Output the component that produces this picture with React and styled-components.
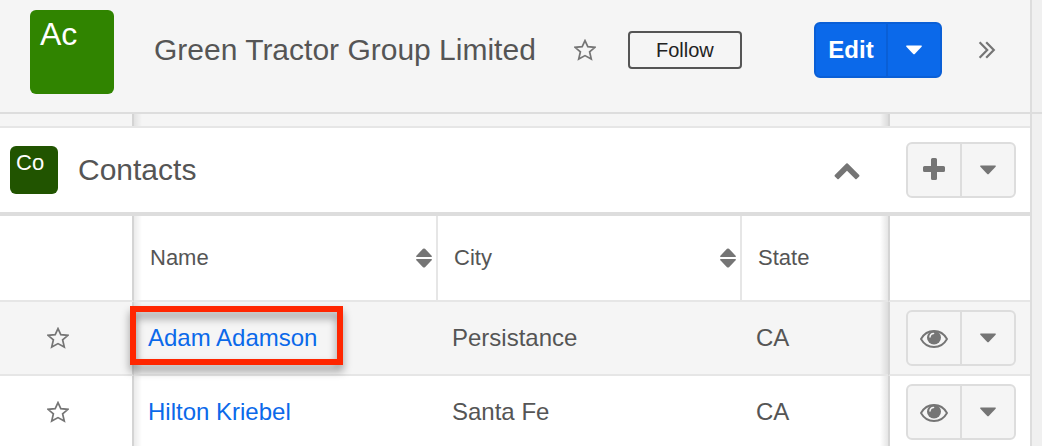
import React from 'react'
import styled, { createGlobalStyle } from 'styled-components';

const GlobalStyle = createGlobalStyle`
  * {
    box-sizing: border-box;
  }
  body {
    margin: 0;
    font-family: "Liberation Sans", Helvetica, Arial, sans-serif;
    color: #555;
    background-color: #f0f0f0;
  }
  button {
    margin: 0;
    padding: 0;
    border: 0;
    background: none;
    color: inherit;
    font-family: inherit;
    cursor: pointer;
  }
  svg {
    display: block;
    fill: currentColor;
  }
`

const Page = styled.div`
  height: 100vh;
  overflow: hidden;
  display: grid;
  grid-template-columns: minmax(0, 1fr) 12px;
  grid-template-rows: auto 1fr;
`

const Gutter = styled.div`
  border-left: 2px solid #ddd;
  background-color: #f0f0f0;
  border-bottom: ${props => props.$line ? "2px solid #ddd" : "0"};
`

const Header = styled.header`
  display: flex;
  align-items: flex-start;
  gap: 40px;
  padding: 10px 34px 18px 30px;
  background-color: #f5f5f5;
  border-bottom: 2px solid #ddd;
`

const Tile = styled.div`
  flex: none;
  width: ${props => props.$large ? "84px" : "48px"};
  height: ${props => props.$large ? "84px" : "48px"};
  padding: ${props => props.$large ? "6px 10px" : "4px 6px"};
  border-radius: 6px;
  background-color: ${props => props.$large ? "#308400" : "#215400"};
  color: #fff;
  font-size: ${props => props.$large ? "32px" : "22px"};
  line-height: ${props => props.$large ? "36px" : "26px"};
`

const HeaderContent = styled.div`
  flex: 1;
  height: 80px;
  display: flex;
  align-items: center;
  gap: 36px;
  h1 {
    margin: 0;
    font-size: 30px;
    font-weight: normal;
    white-space: nowrap;
  }
`

const FollowGroup = styled.div`
  flex: 1;
  display: flex;
  align-items: center;
  gap: 32px;
  padding-left: 2px;
`

const IconButton = styled.button`
  flex: none;
  color: #757575;
`

const FollowButton = styled.button`
  width: 114px;
  height: 38px;
  border: 2px solid #555;
  border-radius: 4px;
  color: #222;
  font-size: 20px;
`

const SplitButton = styled.div`
  flex: none;
  display: inline-flex;
  height: 56px;
  border: 2px solid ${props => props.$primary ? "#0a5fd6" : "#ddd"};
  border-radius: 6px;
  background-color: ${props => props.$primary ? "#0b69ea" : "#f5f5f5"};
  color: ${props => props.$primary ? "#fff" : "#757575"};
  vertical-align: top;
  button {
    display: flex;
    align-items: center;
    justify-content: center;
    width: 52px;
    font-size: 24px;
    font-weight: bold;
  }
  button:first-child {
    width: ${props => props.$primary ? "72px" : "54px"};
    border-right: 2px solid ${props => props.$primary ? "#0a5fd6" : "#ddd"};
  }
`

const Panel = styled.main`
  min-width: 0;
  background-color: #fff;
`

const leftShade = "linear-gradient(to right, rgba(0, 0, 0, 0.08), transparent) left / 8px 100% no-repeat";
const rightShade = "linear-gradient(to left, rgba(0, 0, 0, 0.1), transparent) right / 8px 100% no-repeat";

const Strip = styled.div`
  display: grid;
  grid-template-columns: 134px 1fr 142px;
  height: 14px;
  background-color: #f5f5f5;
  border-bottom: 2px solid #e6e6e6;
  div:first-child {
    border-right: 2px solid #d4d4d4;
  }
  div:nth-child(2) {
    background: ${leftShade}, ${rightShade};
  }
  div:last-child {
    border-left: 2px solid #d4d4d4;
  }
`

const SectionHeader = styled.div`
  display: flex;
  align-items: center;
  gap: 20px;
  padding: 14px 14px 14px 10px;
  border-bottom: 4px solid #ddd;
  h2 {
    flex: 1;
    margin: 0;
    font-size: 30px;
    font-weight: normal;
  }
`

const SectionActions = styled.div`
  display: flex;
  align-items: center;
  gap: 46px;
`

const Table = styled.table`
  width: 100%;
  table-layout: fixed;
  border-collapse: separate;
  border-spacing: 0;
  .star-col {
    width: 134px;
  }
  .state-col {
    width: 146px;
  }
  .action-col {
    width: 142px;
  }
  th, td {
    padding: 0 14px;
    border-bottom: 2px solid #e6e6e6;
    text-align: left;
    font-weight: normal;
  }
  th {
    height: 86px;
    padding: 0 4px 0 16px;
    font-size: 22px;
  }
  th:nth-child(2), th:nth-child(3) {
    border-right: 2px solid #e6e6e6;
  }
  td {
    height: 74px;
    font-size: 24px;
  }
  tr > :first-child {
    border-right: 2px solid #d4d4d4;
  }
  tr > :nth-child(2) {
    background: ${leftShade};
  }
  tr > :nth-child(4) {
    background: ${rightShade};
  }
  tr > :last-child {
    padding-left: 16px;
    border-left: 2px solid #d4d4d4;
  }
  td:first-child button {
    display: block;
    margin: 0 auto;
  }
  td:first-child {
    padding: 0 16px 0 0;
  }
`

const Row = styled.tr`
  background-color: ${props => props.$selected ? "#f5f5f5" : "#fff"};
`

const HeadCell = styled.div`
  display: flex;
  align-items: center;
  justify-content: space-between;
`

const NameLink = styled.a`
  position: relative;
  color: #0b69ea;
  text-decoration: none;
`

const Highlight = styled.span`
  position: absolute;
  inset: -18px -26px -14px -18px;
  border: 6px solid #ff2600;
  filter: drop-shadow(0 6px 4px rgba(0, 0, 0, 0.4));
  pointer-events: none;
`

const StarIcon = () => (
  <svg width="22" height="22" viewBox="0 0 22 22" aria-hidden="true">
    <path d="M11 1.6 L13.8 7.7 L21 8.3 L15.6 12.8 L17.3 20 L11 16.6 L4.7 20 L6.4 12.8 L1 8.3 L8.2 7.7 Z" fill="none" stroke="currentColor" strokeWidth="1.7" />
  </svg>
)

const CaretIcon = () => (
  <svg width="16" height="10" viewBox="0 0 16 10" aria-hidden="true">
    <path d="M0.8 0.5 H15.2 Q16.4 0.8 15.6 1.8 L9 8.8 Q8 9.8 7 8.8 L0.4 1.8 Q-0.4 0.8 0.8 0.5 Z" />
  </svg>
)

const SortIcon = () => (
  <svg width="16" height="20" viewBox="0 0 16 20" fill="#757575" aria-hidden="true">
    <path d="M0.6 9 Q-0.4 8.4 0.6 7.4 L7 0.8 Q8 0 9 0.8 L15.4 7.4 Q16.4 8.4 15.4 9 Z M0.6 11 H15.4 Q16.4 11.6 15.4 12.6 L9 19.2 Q8 20 7 19.2 L0.6 12.6 Q-0.4 11.6 0.6 11 Z" fill="#757575" />
  </svg>
)

const PlusIcon = () => (
  <svg width="22" height="24" viewBox="0 0 22 24" aria-hidden="true">
    <path d="M9.5 0 H12.5 Q14 0 14 1.5 V8 H20.5 Q22 8 22 9.5 V12.5 Q22 14 20.5 14 H14 V20.5 Q14 22 12.5 22 H9.5 Q8 22 8 20.5 V14 H1.5 Q0 14 0 12.5 V9.5 Q0 8 1.5 8 H8 V1.5 Q8 0 9.5 0 Z" />
  </svg>
)

const ChevronUpIcon = () => (
  <svg width="26" height="20" viewBox="0 0 26 20" aria-hidden="true">
    <path d="M12.3 3.6 Q13 3 13.7 3.6 L25.2 15.1 Q25.8 15.8 25.2 16.4 L22.6 19 Q22 19.6 21.3 19 L13 10.7 L4.7 19 Q4 19.6 3.4 19 L0.8 16.4 Q0.2 15.8 0.8 15.1 Z" />
  </svg>
)

const DoubleRightIcon = () => (
  <svg width="18" height="18" viewBox="0 0 18 18" aria-hidden="true">
    <path d="M1.6 1.2 L9.2 9 L1.6 16.8 M8.2 1.2 L15.8 9 L8.2 16.8" fill="none" stroke="currentColor" strokeWidth="2.2" />
  </svg>
)

const EyeIcon = () => (
  <svg width="28" height="20" viewBox="0 0 28 20" aria-hidden="true">
    <path d="M1 11 C4 5.6 9 3 14 3 C19 3 24 5.6 27 11 C24 16.4 19 19 14 19 C9 19 4 16.4 1 11 Z" fill="none" stroke="currentColor" strokeWidth="1.9" strokeLinejoin="round" />
    <circle cx="14" cy="9.6" r="7" />
    <path d="M10 9 Q10.2 5.6 13.6 5.4" fill="none" stroke="#f5f5f5" strokeWidth="1.5" strokeLinecap="round" />
  </svg>
)

const contacts = [
  { name: 'Adam Adamson', city: 'Persistance', state: 'CA', selected: true },
  { name: 'Hilton Kriebel', city: 'Santa Fe', state: 'CA', selected: false },
]

const App = () => {
  return (
    <>
      <GlobalStyle />
      <Page>
        <Header>
          <Tile $large>Ac</Tile>
          <HeaderContent>
            <h1>Green Tractor Group Limited</h1>
            <FollowGroup>
              <IconButton aria-label="Add to favorites"><StarIcon /></IconButton>
              <FollowButton>Follow</FollowButton>
            </FollowGroup>
            <SplitButton $primary>
              <button>Edit</button>
              <button aria-label="More actions"><CaretIcon /></button>
            </SplitButton>
            <IconButton aria-label="Expand"><DoubleRightIcon /></IconButton>
          </HeaderContent>
        </Header>
        <Gutter $line />
        <Panel>
          <Strip>
            <div />
            <div />
            <div />
          </Strip>
          <SectionHeader>
            <Tile>Co</Tile>
            <h2>Contacts</h2>
            <SectionActions>
              <IconButton aria-label="Collapse contacts"><ChevronUpIcon /></IconButton>
              <SplitButton>
                <button aria-label="Add contact"><PlusIcon /></button>
                <button aria-label="Contact options"><CaretIcon /></button>
              </SplitButton>
            </SectionActions>
          </SectionHeader>
          <Table>
            <colgroup>
              <col className="star-col" />
              <col />
              <col />
              <col className="state-col" />
              <col className="action-col" />
            </colgroup>
            <thead>
              <tr>
                <th aria-label="Favorite" />
                <th><HeadCell>Name<SortIcon /></HeadCell></th>
                <th><HeadCell>City<SortIcon /></HeadCell></th>
                <th>State</th>
                <th aria-label="Actions" />
              </tr>
            </thead>
            <tbody>
              {contacts.map((contact) => (
                <Row key={contact.name} $selected={contact.selected}>
                  <td>
                    <IconButton aria-label={`Favorite ${contact.name}`}><StarIcon /></IconButton>
                  </td>
                  <td>
                    <NameLink href="#">
                      {contact.name}
                      {contact.selected && <Highlight />}
                    </NameLink>
                  </td>
                  <td>{contact.city}</td>
                  <td>{contact.state}</td>
                  <td>
                    <SplitButton>
                      <button aria-label={`Preview ${contact.name}`}><EyeIcon /></button>
                      <button aria-label={`Options for ${contact.name}`}><CaretIcon /></button>
                    </SplitButton>
                  </td>
                </Row>
              ))}
            </tbody>
          </Table>
        </Panel>
        <Gutter />
      </Page>
    </>
  )
}

export default App
